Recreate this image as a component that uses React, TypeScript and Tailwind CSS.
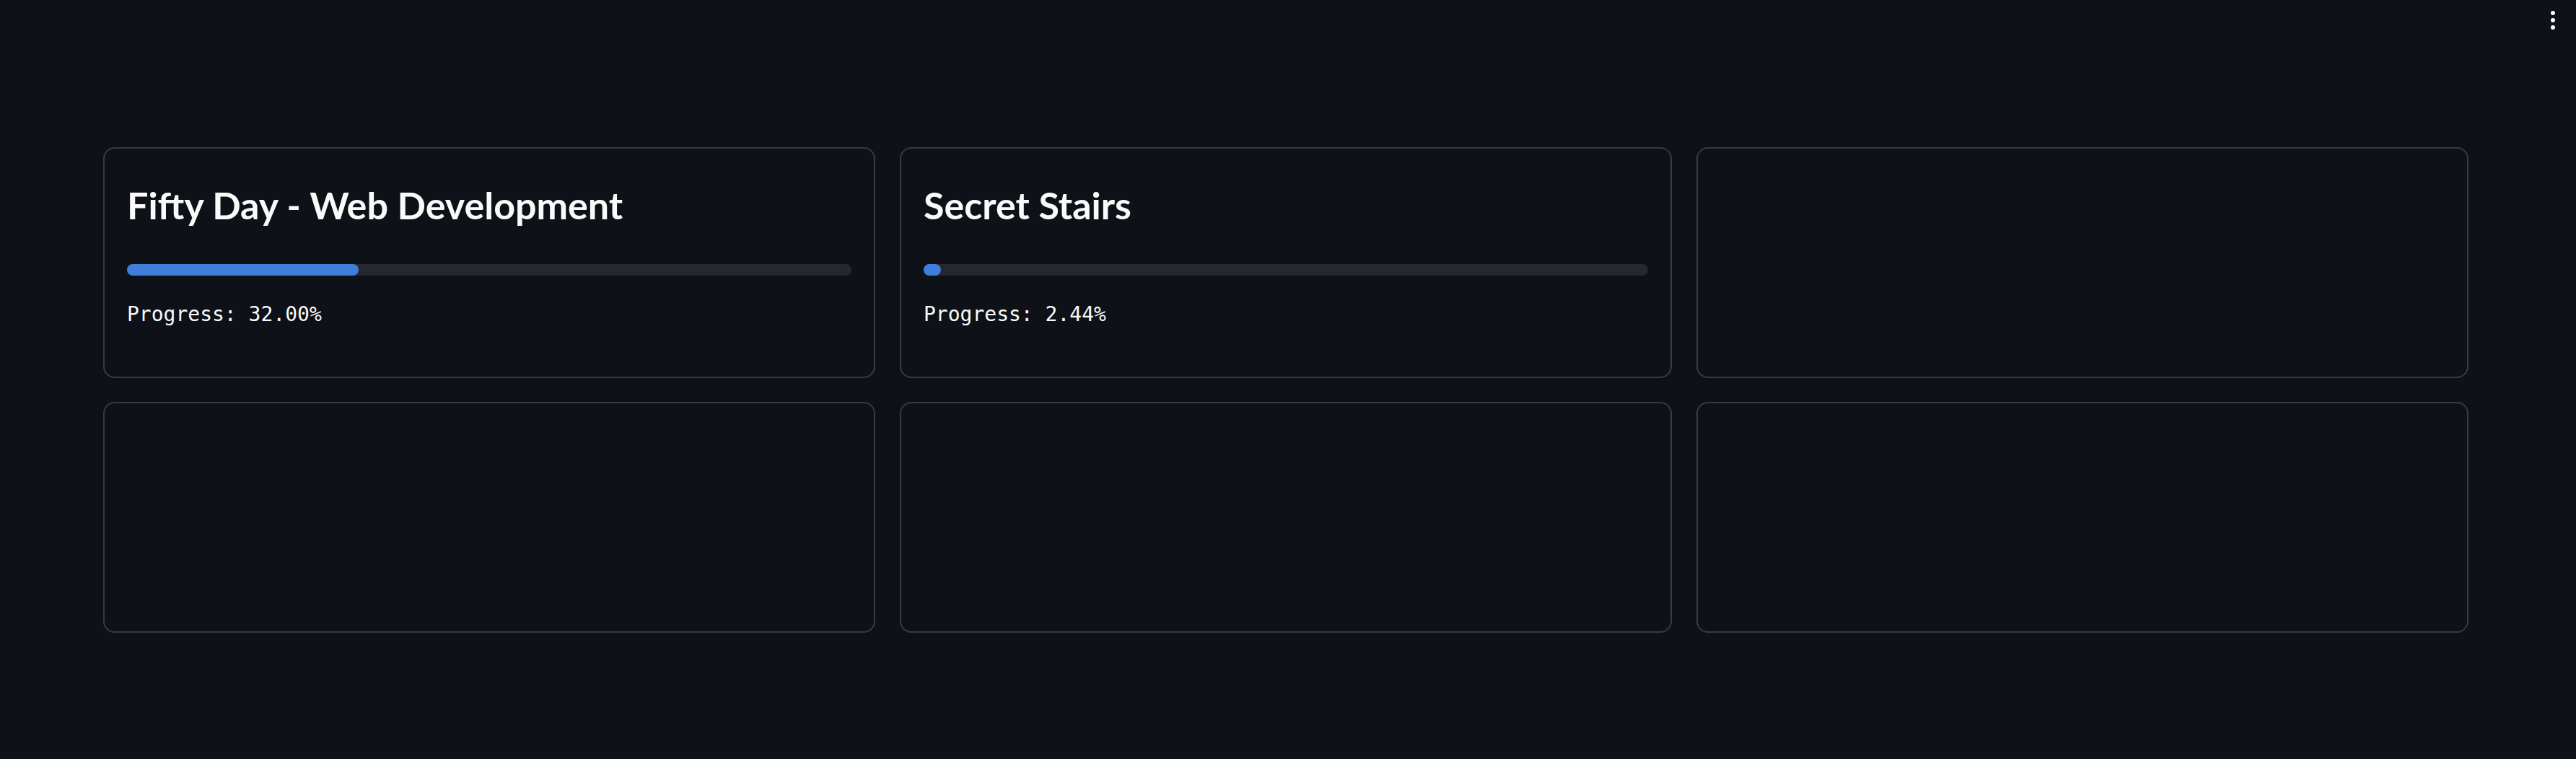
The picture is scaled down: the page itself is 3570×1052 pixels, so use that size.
import React from "react";

const goals = [
  { title: "Fifty Day - Web Development", progress: 32.0 },
  { title: "Secret Stairs", progress: 2.44 },
  null,
  null,
  null,
  null,
];

function GoalCard({ goal }: { goal: { title: string; progress: number } | null }) {
  return (
    <div className="h-[320px] rounded-[16px] border-2 border-[#393b41] px-[31px] pt-[52px]">
      {goal && (
        <>
          <h3 className="font-['Lato',sans-serif] text-[52px] font-bold leading-none text-[#fafafa]">
            {goal.title}
          </h3>
          <div className="mt-[56px] h-[16px] w-full rounded-full bg-[#262730]">
            <div
              className="h-full rounded-full bg-[#3f7fdb]"
              style={{ width: `${goal.progress}%` }}
            />
          </div>
          <p className="mt-[40px] font-['DejaVu_Sans_Mono',monospace] text-[28px] leading-none text-[#fafafa]">
            Progress: {goal.progress.toFixed(2)}%
          </p>
        </>
      )}
    </div>
  );
}

export default function App() {
  return (
    <div className="relative min-h-[1052px] w-full bg-[#0e1117] pl-[143px] pt-[204px]">
      {/* top-right menu */}
      <div className="absolute right-[29px] top-[15px] flex flex-col gap-[4px]">
        <span className="block h-[6px] w-[6px] rounded-full bg-[#fafafa]" />
        <span className="block h-[6px] w-[6px] rounded-full bg-[#fafafa]" />
        <span className="block h-[6px] w-[6px] rounded-full bg-[#fafafa]" />
      </div>

      <div className="grid w-[3278px] grid-cols-3 gap-x-[34px] gap-y-[33px]">
        {goals.map((g, i) => (
          <GoalCard key={i} goal={g} />
        ))}
      </div>
    </div>
  );
}
